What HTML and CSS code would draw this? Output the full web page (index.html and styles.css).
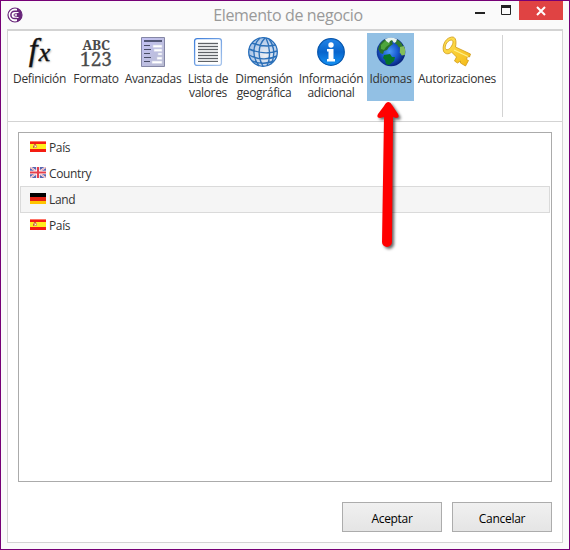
FILE: index.html
```html
<!DOCTYPE html>
<html lang="es">
<head>
<meta charset="utf-8">
<title>Elemento de negocio</title>
<link rel="stylesheet" href="styles.css">
</head>
<body>
<svg class="defs" width="0" height="0">
  <defs>
    <linearGradient id="blue" x1="0" y1="0" x2="0" y2="1"><stop offset="0" stop-color="#2385e8"/><stop offset=".5" stop-color="#0865cc"/><stop offset="1" stop-color="#1493f5"/></linearGradient>
    <linearGradient id="form" x1="0" y1="0" x2="1" y2="1"><stop offset="0" stop-color="#c3c2f5"/><stop offset="1" stop-color="#b9bcd0"/></linearGradient>
    <linearGradient id="frame" x1="0" y1="0" x2="1" y2="1"><stop offset="0" stop-color="#3d7edb"/><stop offset="1" stop-color="#a9c6ec"/></linearGradient>
    <radialGradient id="grid" cx=".6" cy=".6" r=".6"><stop offset="0" stop-color="#f0f1f3"/><stop offset="1" stop-color="#a9c4e8"/></radialGradient>
    <radialGradient id="sea" cx=".45" cy=".48" r=".55"><stop offset="0" stop-color="#4a9af5"/><stop offset=".5" stop-color="#1a5cd2"/><stop offset="1" stop-color="#061e78"/></radialGradient>
    <linearGradient id="gold" x1="0" y1="0" x2="1" y2="1"><stop offset="0" stop-color="#ffe45a"/><stop offset="1" stop-color="#f4b915"/></linearGradient>
    <symbol id="spain" viewBox="0 0 16 11"><path fill="#f41d12" d="M0 0h16v11H0z"/><path fill="#ffee1c" d="M0 3h16v5H0z"/><path fill="#ff7468" d="M0 0h16v1H0z"/><path fill="#e0a060" d="M3 4h4v3H3z"/><path fill="#c8643c" d="M4 3h2v1H4zM3 5h1v2H3z"/><path fill="#eee" d="M5 5h1v1H5z"/></symbol>
  </defs>
</svg>
<div class="window">
  <header class="titlebar">
    <svg class="logo" width="16" height="16" viewBox="0 0 16 16"><circle cx="8" cy="8" r="7" fill="#fff" stroke="#68257a" stroke-width="1.2"/><path d="M10 1.300a7 7 0 0 1 0 13.400z" fill="#68257a"/><path d="M10.500 4.300H7.500a3.600 3.600 0 0 0 0 7.200h3" fill="none" stroke="#68257a" stroke-width="1.500"/><path d="M11 6.800H8.200a1.200 1.200 0 0 0 0 2.400H11" fill="none" stroke="#68257a" stroke-width="1"/><path d="M10 5.500h1.500M10 10.500h1.500" stroke="#fff"/></svg>
    <h1 class="title">Elemento de negocio</h1>
    <div class="controls">
      <svg width="46" height="20" viewBox="0 0 46 20"><path d="M2 11h10v2H2z" fill="#222"/><path d="M28.500 4.500h9v9h-9z" fill="none" stroke="#222"/><path d="M28 4h10v3H28z" fill="#222"/></svg>
      <button class="close" aria-label="Cerrar"><svg width="10" height="10" viewBox="0 0 10 10"><path d="M1 1l8 8M9 1L1 9" stroke="#fff" stroke-width="2"/></svg></button>
    </div>
  </header>
  <main class="panel">
    <nav class="ribbon">
      <div class="tool"><span class="icon fx"><i>f</i><i class="x">x</i></span><span class="label">Definición</span></div>
      <div class="tool"><span class="icon abc"><b>ABC</b><span>123</span></span><span class="label">Formato</span></div>
      <div class="tool"><svg class="icon" width="32" height="32" viewBox="0 0 32 32"><path d="M4.500 1.500h23v29h-23z" fill="url(#form)" stroke="#8587a6"/><path d="M7 4h18v2H7z" fill="#535776"/><path d="M7 9.500h6M7 13.500h7M7 17.500h6M7 21.500h7M7 25.500h6" stroke="#484c66"/><path fill="#fff" stroke="#d1d3e8" stroke-width=".6" d="M16 9h9v2.500h-9zM17 13h8v2.500h-8zM21 17h4v2h-4zM20 21h5v2.500h-5zM15 25h10v2.500H15z"/></svg><span class="label">Avanzadas</span></div>
      <div class="tool"><svg class="icon" width="32" height="32" viewBox="0 0 32 32"><rect x="2.600" y="2.600" width="26.800" height="26.800" rx="2.500" fill="#fff" stroke="url(#frame)" stroke-width="1.300"/><path d="M6 6h20v20H6z" fill="#e4e5e6"/><path d="M6 7.500h20M6 10.500h20M6 13.500h20M6 16.500h20M6 19.500h20M6 22.500h20M6 25.500h20" stroke="#606367" stroke-width="1.200"/></svg><span class="label">Lista de<br>valores</span></div>
      <div class="tool"><svg class="icon" width="32" height="32" viewBox="0 0 32 32"><circle cx="16" cy="16" r="14.300" fill="url(#grid)" stroke="#236bb9" stroke-width="1.300"/><g fill="none" stroke="#2c70b8" stroke-width="1.400"><path d="M13 2C5 9 5 21 12 30M18 2C10 10 11 22 16 30M19 2c4 8 5 20 1 28M22 3c6 8 6 18 2 25M5 7c8 3 15 4 23 2M2 13c9 4 20 5 28 2M2 19c9 5 20 5 28 1M5 25c8 3 15 3 22 0"/></g></svg><span class="label">Dimensión<br>geográfica</span></div>
      <div class="tool"><svg class="icon" width="32" height="32" viewBox="0 0 32 32"><circle cx="16" cy="16" r="13.300" fill="url(#blue)" stroke="#0656ad" stroke-width="1.200"/><circle cx="16" cy="9" r="2.700" fill="#fff"/><path d="M12 13h6.500v10H20v2.500h-8V23h1.500v-7.500H12z" fill="#fff"/></svg><span class="label">Información<br>adicional</span></div>
      <div class="tool selected"><svg class="icon" width="32" height="32" viewBox="0 0 32 32"><circle cx="16" cy="16" r="14.300" fill="url(#sea)"/><path d="M3 14Q4 6 11 3l5-1 3 2-2 2 1 2-4 3-2 3-3 1-1 3-3-1-1-3z" fill="#286f2c"/><path d="M6 9l4-4 4 1 1 2-4 3-2 3-3-1z" fill="#4da53a"/><path d="M9 19l6-1 2 3h3l-1 4-5 4-3-1-1-4-2-2z" fill="#077529"/><path d="M22 3.500q5 3 6 7l-4 1-2-3-2-1z" fill="#317b2d"/><path d="M25 11l4-1 1.300 4-.5 5-3 .5-2-3z" fill="#83bd59"/><path d="M10 3q6-3 12 0l-1 3-2 1-2-3-2 1-1 2-3-2z" fill="#e7f3ee"/></svg><span class="label">Idiomas</span></div>
      <div class="tool"><svg class="icon" width="32" height="32" viewBox="0 0 32 32"><path fill-rule="evenodd" d="M9 1.500c5-2 7 2 5.500 9.500l15 7-1 3-2-.5-1 3 2 1-3 5.500-5-3v-2l-3 2-3-2 2-4-5-5c-3 3-7 2-8-1C1 10 4 3 9 1.500zM10 4C5 5 3 12 5 13.500 8 15 12 9 12 6c0-1-1-2-2-2z" fill="url(#gold)" stroke="#cf9914" stroke-width=".8"/><path d="M13 14l14 6.500" stroke="#fff08a" stroke-width="1.300"/></svg><span class="label">Autorizaciones</span></div>
    </nav>
    <div class="list">
      <div class="row"><svg class="flag" width="16" height="11"><use href="#spain"/></svg><span>País</span></div>
      <div class="row"><svg class="flag" width="16" height="11" viewBox="0 0 16 11"><path fill="#5966b0" d="M0 0h16v11H0z"/><path d="M0 0l16 11M16 0L0 11" stroke="#fff" stroke-width="1.800"/><path d="M0 0l16 11M16 0L0 11" stroke="#ee7780" stroke-width=".7"/><path d="M8 0v11M0 5.500h16" stroke="#fff" stroke-width="3.600"/><path d="M8 0v11M0 5.500h16" stroke="#e5404c" stroke-width="2"/></svg><span>Country</span></div>
      <div class="row current"><svg class="flag" width="16" height="11" viewBox="0 0 16 11"><path d="M0 0h16v4H0z"/><path fill="#e32214" d="M0 4h16v4H0z"/><path fill="#ffc400" d="M0 8h16v3H0z"/></svg><span>Land</span></div>
      <div class="row"><svg class="flag" width="16" height="11"><use href="#spain"/></svg><span>País</span></div>
    </div>
    <footer class="actions"><button class="action">Aceptar</button><button class="action">Cancelar</button></footer>
  </main>
  <svg class="arrow" width="40" height="160" viewBox="0 0 40 160"><path d="M13.500 2Q11 2 9 6L3 14q-2 4 2 4l4-1-2 125a5 5 0 0 0 10 0l1-125 3 1q4 0 2-4L17 5q-1.500-3-3.500-3z" fill="red"/></svg>
</div>
</body>
</html>
```

FILE: styles.css
```css
* { box-sizing: border-box; }
body { margin: 0; background: #fff; font: 12px/14px "Open Sans", "Noto Sans", sans-serif; color: #333; }
.defs { position: absolute; }
.window { position: relative; width: 570px; height: 550px; border: 1px solid #760076; background: #fafafa; padding: 0 6px 6px; display: flex; flex-direction: column; }
.titlebar { height: 28px; display: grid; grid-template-columns: 96px 1fr 90px; flex: none; }
.logo { margin: 6px 0 0; }
.title { margin: 4px 0 0; font-size: 16px; line-height: 20px; font-weight: 400; color: #999; text-align: center; letter-spacing: -.36px; }
.controls { display: flex; height: 19px; margin-right: -6px; }
.controls > svg { flex: none; }
.close { width: 44px; height: 19px; margin: 0; padding: 0; border: 0; background: #e04343; display: flex; align-items: center; justify-content: center; }
.panel { flex: 1; border: 1px solid #d3d3d3; border-top-width: 2px; background: #fff; display: flex; flex-direction: column; }
.ribbon { height: 91px; flex: none; border-bottom: 1px solid #d3d3d3; display: grid; grid-template-columns: 59px 50px 60px 46px 62px 68px 47px 82px; column-gap: 2px; padding: 2px 0 0 2px; position: relative; }
.ribbon::after { content: ""; position: absolute; left: 494px; top: 4px; width: 1px; height: 82px; background: #d3d3d3; }
.tool { height: 68px; padding-top: 3px; display: flex; flex-direction: column; align-items: center; text-align: center; white-space: nowrap; }
.tool:nth-child(5) .icon { margin-left: -2px; }
.tool.selected { background: #92c0e4; }
.icon { width: 32px; height: 32px; flex: none; }
.label { margin-top: 4px; letter-spacing: -.33px; }
.fx { font: 32px/27px "Liberation Serif", serif; color: #111; -webkit-text-stroke: .35px #111; text-shadow: 1px 1px 2px #aaa; display: flex; justify-content: center; gap: 1px; }
.fx .x { font-size: 26px; line-height: 34px; }
.abc { display: flex; flex-direction: column; align-items: center; font: 19px/16px "Noto Serif", "Liberation Serif", serif; color: #4b4b4b; padding-top: 3px; -webkit-text-stroke: .3px #4b4b4b; }
.abc b { font-size: 13.500px; line-height: 12px; letter-spacing: -.2px; -webkit-text-stroke: 0; }
.list { margin: 10px 10px 0; height: 350px; border: 1px solid #ababab; padding: 1px 1px 0; }
.row { height: 26px; display: flex; align-items: center; gap: 3px; padding: 2px 0 0 10px; letter-spacing: -.35px; }
.row.current { height: 27px; margin-bottom: -1px; background: #f5f5f5; border: 1px solid #dadada; padding: 1px 0 0 9px; }
.flag { margin-top: -3px; }
.actions { display: flex; justify-content: flex-end; gap: 10px; padding: 20px 10px 0; }
.action { width: 100px; height: 30px; padding: 3px 0 0; border: 1px solid #acacac; background: linear-gradient(#f0f0f0, #e5e5e5); font: 12px/16px "Open Sans", sans-serif; letter-spacing: -.3px; color: #000; }
.arrow { position: absolute; left: 374px; top: 99px; filter: drop-shadow(2px 2px 1.500px #0009); }
```
